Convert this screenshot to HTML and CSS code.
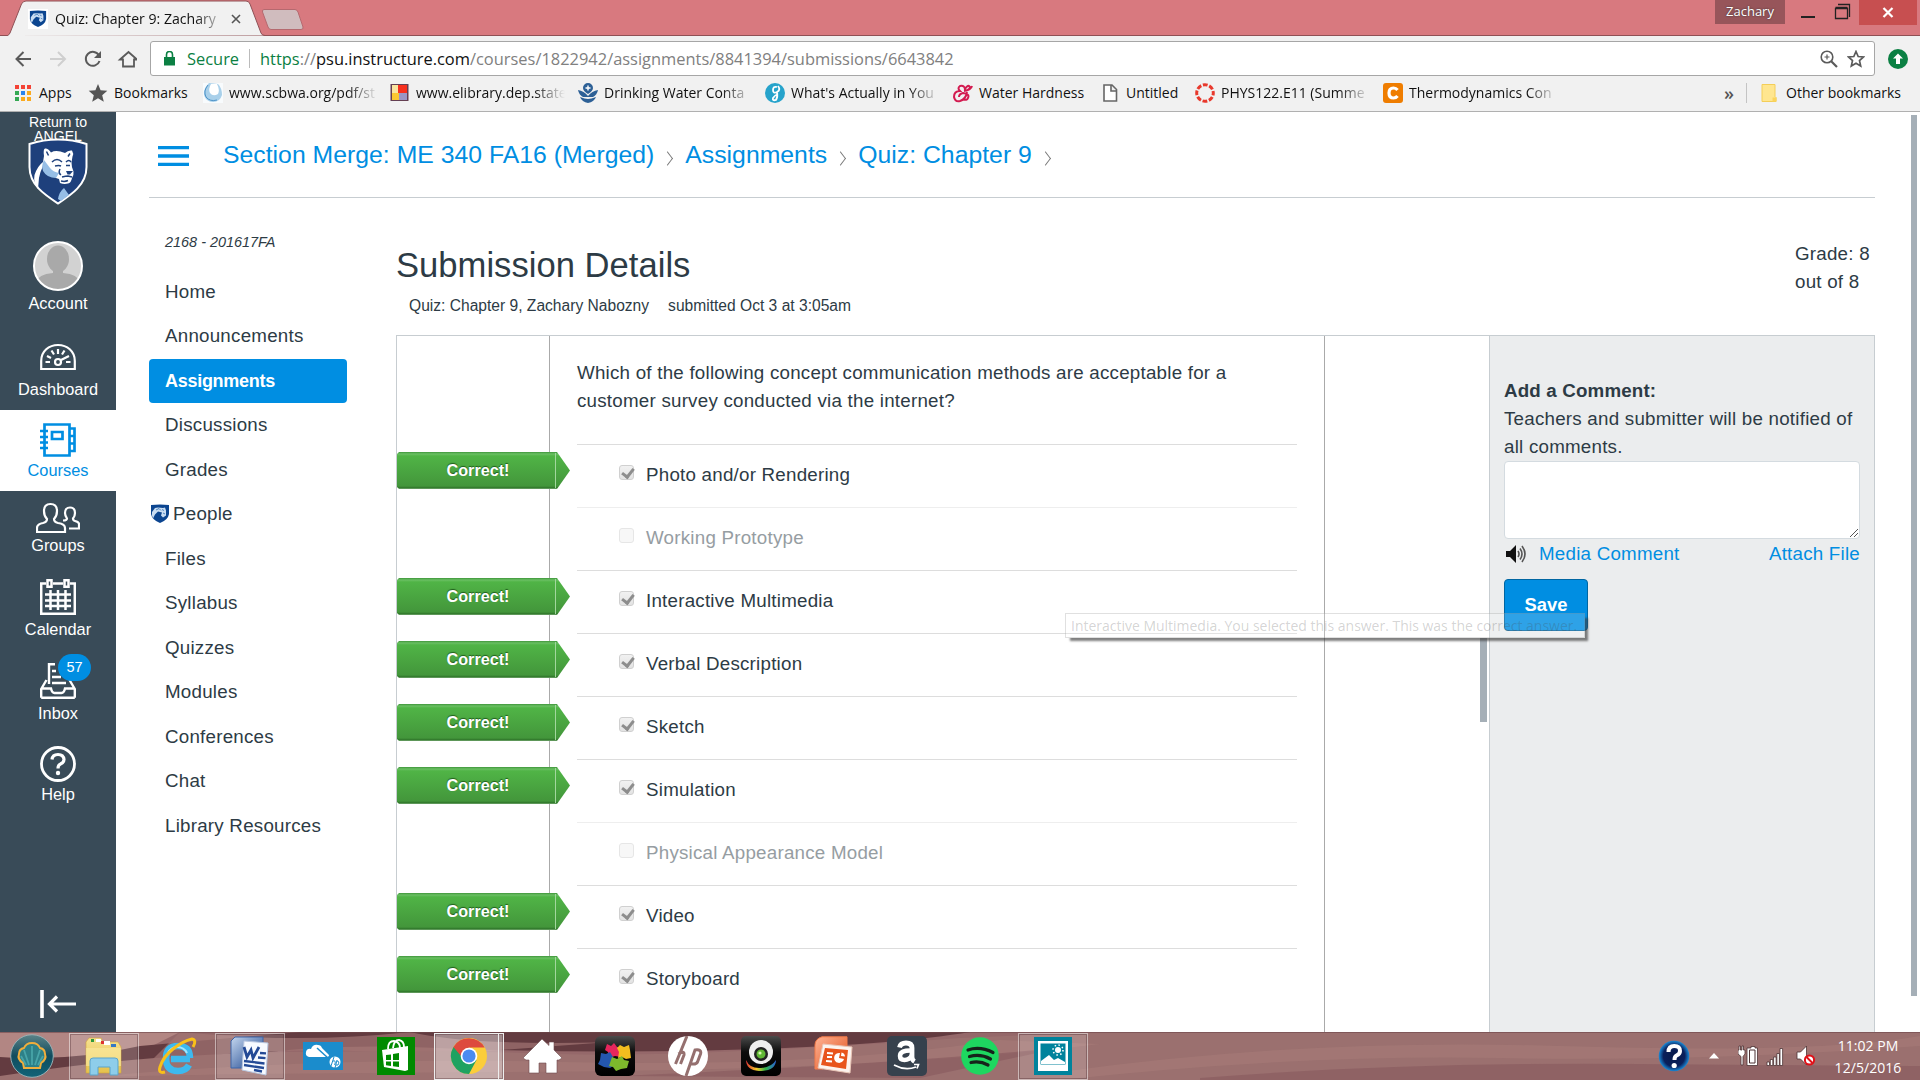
FILE: index.html
```html
<!DOCTYPE html>
<html lang="en">
<head>
<meta charset="utf-8">
<title>Quiz: Chapter 9: Zachary Nabozny</title>
<link rel="stylesheet" href="styles.css">
</head>
<body>
<svg class="defs" aria-hidden="true">
  <defs>
    <symbol id="lion" viewBox="0 0 60 67">
      <path d="M1.500 6Q30-3 58.500 6V29C58.500 47 43 57 30 65.500 17 57 1.500 47 1.500 29Z" fill="#1e407c" stroke="#fff" stroke-width="2"/>
      <path d="M16 18Q15 11 17 10.500q3-.5 6 4 5-3 14 .5 3-3 7-2.500 2 3 .5 6l-1 6q0 5 2 9 .5 4-1.500 6.500-1 5-4 5.500-4 1-8-.5l-1-4q-5-1-8-6l-8-7q-3 6-4 12l-1 11Q5 45 6.500 37q3-9 8.500-13z" fill="#fff"/>
      <path d="M16 22l6 8q3 4 9 5l-3 5q-9 0-13-7-2-5 1-11zM36 50l5 7-8 6-3-2q1-7 6-11z" fill="#96bee6"/>
      <path d="M24 24q5-5 10 0M38 24q3-3 5 0M27 28q4-1 6 0M38 27.500h4M34 39q4-1 6-1l4 1M33 43q4 1 7-.5M18.500 13.500l2 4M42 15.500l-2 3M32 31q-2 4 1 6" fill="none" stroke="#1e407c" stroke-width="1.500"/>
      <path d="M38 33h7l-3 3.500h-2.500z" fill="#1e407c"/>
    </symbol>
    <symbol id="lion-small" viewBox="0 0 20 20">
      <path d="M1 1q9-1 18 0v9q-1 6-9 9-8-3-9-9z" fill="#0b4590"/>
      <path d="M2 8l3-4 3-.500 5 .5 2-.5 1 3v5l-3 2-2-2 1-3-4-1-3 3-2 4-1-3z" fill="#c9ddf2"/>
      <path d="M6 6l3-1.500 2 2M12 5.500l2 1M13 9l2 1" stroke="#4f86c0" fill="none"/>
    </symbol>
    <linearGradient id="shellbg" x1="0" y1="0" x2="0" y2="1"><stop offset="0" stop-color="#5b8388"/><stop offset=".5" stop-color="#104c5e"/><stop offset="1" stop-color="#126478"/></linearGradient>
    <linearGradient id="fold" x1="0" y1="0" x2="0" y2="1"><stop offset="0" stop-color="#f7e190"/><stop offset="1" stop-color="#e5c14c"/></linearGradient>
    <linearGradient id="blk" x1="0" y1="0" x2="0" y2="1"><stop offset="0" stop-color="#4b4b4b"/><stop offset=".4" stop-color="#0c0c0c"/><stop offset="1" stop-color="#000"/></linearGradient>
    <linearGradient id="wordbg" x1="0" y1="0" x2="1" y2="1"><stop offset="0" stop-color="#c5d7ef"/><stop offset="1" stop-color="#153f8a"/></linearGradient>
    <linearGradient id="pptbg" x1="0" y1="0" x2="1" y2="1"><stop offset="0" stop-color="#ffb394"/><stop offset="1" stop-color="#e0501c"/></linearGradient>
    <linearGradient id="rain"><stop offset="0" stop-color="#d33"/><stop offset=".35" stop-color="#f4c82b"/><stop offset=".65" stop-color="#32b44a"/><stop offset="1" stop-color="#2a62d8"/></linearGradient>
    <radialGradient id="helpbg"><stop offset="0" stop-color="#081a4a"/><stop offset=".7" stop-color="#0a205c"/><stop offset="1" stop-color="#1b8ad6"/></radialGradient>
  </defs>
</svg>

<header class="browser">
  <div class="titlebar">
    <div class="tab">
      <svg class="tab-shape" width="260" height="36" viewBox="0 0 260 36"><path d="M0 36Q2 35 3 33L14.500 4Q16 1 19 1H239Q242 1 243 4L254 33Q255 35.500 258 35.500" fill="#f1f1f1" stroke="#8f5055" stroke-width="1"/></svg>
      <div class="tab-content">
        <span class="favicon"><svg width="18" height="20"><use href="#lion-small"/></svg></span>
        <span class="tab-title">Quiz: Chapter 9: Zachary</span>
        <svg width="10" height="10" viewBox="0 0 10 10"><path d="M1 1l8 8M9 1L1 9" stroke="#555" stroke-width="1.600"/></svg>
      </div>
    </div>
    <svg class="newtab" width="42" height="21" viewBox="0 0 42 21"><path d="M2 .5H33Q35 .5 36 3L41 18Q41.500 20.500 39 20.500H9Q7 20.500 6 18L.5 3Q0 .5 2 .5Z" fill="#d0bcbe" stroke="#b5696f"/></svg>
    <div class="window-buttons">
      <span class="profile">Zachary</span>
      <svg width="74" height="26" viewBox="0 0 74 26"><path d="M16 17h14" stroke="#222" stroke-width="2"/><path d="M50.500 8.500h12v10h-12zM50.500 7.500h12M53 4.500h11.500V17" fill="none" stroke="#222" stroke-width="1.300"/></svg>
      <span class="close"><svg width="12" height="11" viewBox="0 0 12 11"><path d="M1.500 1l9 9M10.500 1l-9 9" stroke="#fff" stroke-width="2.200"/></svg></span>
    </div>
  </div>
  <div class="toolbar">
    <svg class="nav-icons" width="122" height="20" viewBox="0 0 122 20" fill="none" stroke-width="2">
      <path d="M16 10H1.500M8.500 3l-7 7 7 7" stroke="#5a5a5a"/>
      <path d="M35 10h14.500M43 3l7 7-7 7" stroke="#cfcfcf"/>
      <path d="M84 6.500A7 7 0 1 0 84.500 12" stroke="#5a5a5a"/><path d="M86 2v7h-7z" fill="#5a5a5a"/>
      <path d="M105 10.500l8.500-7.500L122 10.500h-3v7h-11v-7z" stroke="#5a5a5a" stroke-width="1.800"/>
    </svg>
    <div class="omnibox">
      <svg width="11" height="15" viewBox="0 0 11 15"><path d="M0 6h11v8.500H0z" fill="#0b8043"/><path d="M2.500 6V3.500a3 3 0 0 1 6 0V6" fill="none" stroke="#0b8043" stroke-width="1.600"/></svg>
      <span class="secure">Secure</span>
      <span class="url"><span class="scheme">https</span>://<span class="host">psu.instructure.com</span>/courses/1822942/assignments/8841394/submissions/6643842</span>
      <svg class="zoom-icon" width="18" height="18" viewBox="0 0 18 18" fill="none" stroke="#5a5a5a"><circle cx="7" cy="7" r="5.800" stroke-width="1.600"/><path d="M11 11l6 6" stroke-width="2.200"/><path d="M4.500 7h5M7 4.500v5" stroke-width="1.200"/></svg>
      <svg class="star" width="18" height="18" viewBox="0 0 18 18"><path d="M9 1.500l2.200 5 5.300.5-4 3.600 1.200 5.400L9 13.200 4.300 16l1.200-5.400L1.500 7l5.300-.5z" fill="none" stroke="#5a5a5a" stroke-width="1.700"/></svg>
    </div>
    <svg class="update" width="20" height="20" viewBox="0 0 20 20"><circle cx="10" cy="10" r="10" fill="#0b8043"/><path d="M10 4.500l5 5h-3V15H8V9.500H5z" fill="#fff"/></svg>
  </div>
  <div class="bookmarks">
    <div class="bm"><svg viewBox="0 0 20 20"><g fill="#f44336"><path d="M2 2h4v4H2zM8 2h4v4H8zM14 2h4v4h-4z"/></g><path d="M2 8h4v4H2zM2 14h4v4H2z" fill="#34a853"/><path d="M8 8h4v4H8z" fill="#2a84f0"/><path d="M14 8h4v4h-4zM8 14h4v4H8zM14 14h4v4h-4z" fill="#fbaa1e"/></svg><span>Apps</span></div>
    <div class="bm"><svg viewBox="0 0 20 20"><path d="M10 1l2.600 6.200 6.700.6-5.100 4.400 1.600 6.600L10 15.300l-5.800 3.500 1.600-6.600L.7 7.800l6.700-.6z" fill="#555"/></svg><span>Bookmarks</span></div>
    <div class="bm fade"><svg viewBox="0 0 20 20"><path d="M0 0h20v20H0z" fill="#f8fbfd"/><path d="M6 0Q0 6 1 12q2 7 9 7t9-7q0-7-4-11z" fill="#a9d0ea"/><path d="M8 1q-3 5-1 9 3 4 8 1 2-4-1-10z" fill="#fff"/><path d="M5 2Q0 8 3 14q4 5 11 3" fill="none" stroke="#4e93c8"/></svg><span>www.scbwa.org/pdf/st</span></div>
    <div class="bm fade"><svg viewBox="0 0 20 20"><path d="M.5 1h18v17H.5z" fill="#643f52"/><path d="M2 2h6v8H2z" fill="#f9e5a0"/><path d="M8 2h9v8H8z" fill="#f7301e"/><path d="M2 10h7v7H2z" fill="#fbc832"/><path d="M9 10h8v7H9z" fill="#9b95c5"/></svg><span>www.elibrary.dep.state</span></div>
    <div class="bm fade"><svg viewBox="0 0 20 20"><path d="M5 5a5 5 0 0 1 10 0q0 3-5 6-5-3-5-6zM0 7q6 1 10 6 4-5 10-6-1 5-5 7H5Q1 12 0 7zM2 14q5 2 8 2t8-2q-2 5-8 6-6-1-8-6z" fill="#2d6096"/><path d="M7.500 5h5M10 2.500v5" stroke="#fff" stroke-width="1.400"/></svg><span>Drinking Water Conta</span></div>
    <div class="bm fade"><svg viewBox="0 0 20 20"><circle cx="10" cy="10" r="10" fill="#26a3cb"/><path d="M12 4q-4-1-4 3t4 2 1-6M12 9q1 5-1 8-4 1-3-2 2-3 5-4" fill="none" stroke="#fff" stroke-width="1.800"/></svg><span>What's Actually in You</span></div>
    <div class="bm"><svg viewBox="0 0 20 20"><path d="M12 7q0-5-5-4-3 2 0 5-6 0-6 6 1 5 6 4 6-2 7-9M6 14q0-3 4-4 7 1 5 5-1 3-5 1M12 6q3-5 5-2 0 3-6 4 7-1 8-5" fill="none" stroke="#d31b50" stroke-width="2"/></svg><span>Water Hardness</span></div>
    <div class="bm untitled"><svg viewBox="0 0 20 20"><path d="M4 2h8l4.500 4.500V18H4zM11 2v6h6" fill="#fff" stroke="#666" stroke-width="1.600"/></svg><span>Untitled</span></div>
    <div class="bm fade"><svg viewBox="0 0 20 20"><circle cx="10" cy="10" r="8.300" fill="none" stroke="#e8392c" stroke-width="3" stroke-dasharray="4.800 1.720" stroke-dashoffset="2.400"/></svg><span>PHYS122.E11 (Summe</span></div>
    <div class="bm fade"><svg viewBox="0 0 20 20"><rect width="20" height="20" rx="3" fill="#ef7d00"/><path d="M14.500 7Q13 5 10.500 5 6 5 6 10t4.500 5q2.500 0 4-2" fill="none" stroke="#fff" stroke-width="3.200"/></svg><span>Thermodynamics Con</span></div>
    <span class="more">»</span>
    <span class="other"><svg width="16" height="18" viewBox="0 0 16 18"><path d="M1 .5h13v12l1 1v4H1z" fill="#ffe68f" stroke="#f4ce58"/><path d="M11.500 13.500h4v4h-4z" fill="#fbd45c"/></svg><span>Other bookmarks</span></span>
  </div>
</header>

<main class="page">
  <nav class="global-nav">
    <div class="logo"><div class="angel">Return to<br>ANGEL</div><svg width="60" height="67"><use href="#lion"/></svg></div>
    <div class="gn account"><svg width="50" height="50" viewBox="0 0 50 50"><defs><clipPath id="av"><circle cx="25" cy="25" r="24"/></clipPath></defs><circle cx="25" cy="25" r="24" fill="#d2d2d2"/><g clip-path="url(#av)" fill="#a9a9a9"><ellipse cx="25" cy="18" rx="11" ry="13.500"/><path d="M20 28h10v4q15 1 17 10v8H3v-8q2-9 17-10z"/></g><circle cx="25" cy="25" r="24" fill="none" stroke="#fff" stroke-width="2"/></svg><span>Account</span></div>
    <div class="gn dash"><svg width="36" height="36" viewBox="0 0 36 36" fill="none" stroke="#fff" stroke-width="2.200"><path d="M1.200 30V22C1.200 12 9 6 18 6s16.800 6 16.800 16v8z"/><circle cx="18" cy="23" r="3"/><path d="M21 21l8-4M5.500 23H10M26 23h4.500M7 17l4 2M11.500 11.500l2.500 4M18 10v5M24.500 11.500l-2.500 4"/></svg><span>Dashboard</span></div>
    <div class="gn active"><svg width="36" height="36" viewBox="0 0 36 36" fill="none" stroke="#008ee2" stroke-width="2.700"><path d="M4.500 2.500h25v31h-25zM29.500 6.500h5v22.500h-5M29.500 14h5M29.500 21.500h5M12 10h10.500v7H12z"/><path d="M0 9h8M0 15h8M0 20.500h8M0 26h8"/></svg><span>Courses</span></div>
    <div class="gn groups"><svg width="44" height="36" viewBox="0 0 44 36" fill="none" stroke="#fff" stroke-width="2.200"><path d="M1 32v-4q0-4 6-5 4-1 4-4-3-3-3-8 0-7 6.500-7T21 11q0 5-3 8 0 3 4 4 7 1 7 5v4zM27 20.500q4 0 4-2-2-3-2-5.500 0-5.500 5-5.500t5 5.500q0 3-2 5.500 0 2 2 2.500 4 1 4 3v4.500H33"/></svg><span>Groups</span></div>
    <div class="gn cal"><svg width="36" height="36" viewBox="0 0 36 36" fill="none" stroke="#fff" stroke-width="2.500"><path d="M6 4.500H1.200v30.300h33.600V4.500H30M13 4.500h10"/><path d="M7.500 1.200h4v6.600h-4zM24.500 1.200h4v6.600h-4z" /><path d="M5 15.500h26M5 21.500h26M5 27h26M10.500 11v20M18 11v20M25.500 11v20"/></svg><span>Calendar</span></div>
    <div class="gn inbox"><svg width="36" height="36" viewBox="0 0 36 36" fill="none" stroke="#fff" stroke-width="2.400"><path d="M1.200 34.800V26L6.500 17M34.800 34.800V26L29.500 17M1.200 25.500H11q1 4.500 3.500 4.500h7q2.500 0 3.500-4.500h9.800M1.200 34.800h33.600M9 21V1.200h6M12 8h4M12 14h9M12 20h14"/></svg><b class="badge">57</b><span>Inbox</span></div>
    <div class="gn help"><svg width="36" height="36" viewBox="0 0 36 36" fill="none" stroke="#fff" stroke-width="2.800"><circle cx="18" cy="18" r="16.500"/><path d="M12 13.500q.5-5 6-5t6 5q0 3-3.500 4.500-2.500 1-2.500 4.500" stroke-width="3.200"/><circle cx="18" cy="27" r="2.200" fill="#fff" stroke="none"/></svg><span>Help</span></div>
    <svg class="collapse" width="36" height="28" viewBox="0 0 36 28" fill="none" stroke="#fff" stroke-width="3.600"><path d="M2 0v28"/><path d="M36 14H10M17 6.500L9.500 14l7.500 7.500" stroke-width="3.200"/></svg>
  </nav>

  <div class="content">
    <div class="crumbs">
      <svg class="burger" width="31" height="20" viewBox="0 0 31 20"><path d="M0 1.700h31M0 10h31M0 18.300h31" stroke="#008ee2" stroke-width="3.300"/></svg>
      <a>Section Merge: ME 340 FA16 (Merged)</a><i></i><a>Assignments</a><i></i><a>Quiz: Chapter 9</a><i></i>
    </div>
    <div class="columns">
      <nav class="course-nav">
        <div class="term">2168 - 201617FA</div>
        <a>Home</a><a>Announcements</a><a class="on">Assignments</a><a>Discussions</a><a>Grades</a><a class="people"><svg width="20" height="20"><use href="#lion-small"/></svg>People</a><a>Files</a><a>Syllabus</a><a>Quizzes</a><a>Modules</a><a>Conferences</a><a>Chat</a><a>Library Resources</a>
      </nav>
      <section class="submission">
        <div class="head">
          <div>
            <h1>Submission Details</h1>
            <div class="meta"><span>Quiz: Chapter 9, Zachary Nabozny</span><span>submitted Oct 3 at 3:05am</span></div>
          </div>
          <div class="grade">Grade: 8<br>out of 8</div>
        </div>
        <div class="frame">
          <div class="preview">
            <div class="gutter"></div>
            <div class="quiz">
              <p>Which of the following concept communication methods are acceptable for a<br>customer survey conducted via the internet?</p>
              <div class="answer ok"><b class="tag">Correct!</b><span class="box"></span>Photo and/or Rendering</div>
              <div class="answer no"><span class="box"></span>Working Prototype</div>
              <div class="answer ok"><b class="tag">Correct!</b><span class="box"></span>Interactive Multimedia</div>
              <div class="answer ok"><b class="tag">Correct!</b><span class="box"></span>Verbal Description</div>
              <div class="answer ok"><b class="tag">Correct!</b><span class="box"></span>Sketch</div>
              <div class="answer ok"><b class="tag">Correct!</b><span class="box"></span>Simulation</div>
              <div class="answer no"><span class="box"></span>Physical Appearance Model</div>
              <div class="answer ok"><b class="tag">Correct!</b><span class="box"></span>Video</div>
              <div class="answer ok"><b class="tag">Correct!</b><span class="box"></span>Storyboard</div>
            </div>
            <div class="inner-scroll"></div>
          </div>
          <aside class="comments">
            <b>Add a Comment:</b>
            <div class="hint">Teachers and submitter will be notified of<br>all comments.</div>
            <div class="textarea"><svg width="8" height="8" viewBox="0 0 8 8"><path d="M0 8l8-8M4 8l4-4" stroke="#555" stroke-width="1"/></svg></div>
            <div class="links">
              <svg width="20" height="18" viewBox="0 0 20 18"><path d="M0 6h4l6-6v18l-6-6H0z" fill="#111"/><path d="M12 6q2 3 0 6M14 3.500q4 5.500 0 11M16 1q6 8 0 16" fill="none" stroke="#555" stroke-width="1.600"/></svg>
              <a>Media Comment</a><a class="attach">Attach File</a>
            </div>
            <button class="save">Save</button>
          </aside>
        </div>
      </section>
    </div>
  </div>
  <div class="outer-scroll"></div>
  <div class="tooltip">Interactive Multimedia. You selected this answer. This was the correct answer.</div>
</main>

<footer class="taskbar">
  <svg class="dunes" width="1920" height="48" preserveAspectRatio="none" viewBox="0 0 1920 48">
    <path d="M0 0H1920V48H0z" fill="#95686a"/>
    <path d="M0 0H180L120 30 0 34z" fill="#b28683"/><path d="M0 25Q70 30 140 14L300 0H970Q900 12 760 17T460 17Q340 10 250 22T0 46z" fill="#633b40"/>
    <path d="M180 0q120 12 230 0 60 14 200 10L420 24Q300 10 150 30z" fill="#a27573" opacity=".7"/>
    <path d="M0 44Q140 22 290 20T560 22 960 6L1100 0H1920V48H0z" fill="#9b706f"/>
    <path d="M60 48Q300 24 560 30T1000 8L1100 12Q900 38 500 40T60 48zM1060 40Q1300 6 1560 14t360-10v10Q1700 30 1500 26t-440 22z" fill="#a77b78" opacity=".55"/>
    <path d="M620 44Q860 34 1060 16L920 46zM1200 46Q1400 30 1640 32t280 2v14H1200z" fill="#87595d" opacity=".6"/>
    <path d="M0 .5H1920" stroke="#6f474b" opacity=".6"/>
  </svg>
  <div class="apps">
    <span class="start"><svg width="44" height="44" viewBox="0 0 44 44"><circle cx="22" cy="22" r="21.300" fill="url(#shellbg)" stroke="#9ab0b4"/><path d="M14 34l-1-5q-6-4-4-9 0-5 5-6 2-5 8-5t8 5q5 1 5 6 2 5-4 9l-1 5z" fill="#2d8088" stroke="#f0ae3c" stroke-width="2"/><path d="M22 31V12M19 31l-5-15M25 31l5-15M16 31l-5-9M28 31l5-9" stroke="#48a4a8" stroke-width="1.800"/></svg></span>
    <span class="app open"><svg viewBox="0 0 40 40"><path d="M5 2h12l2 4h15l3 5v26H2V6z" fill="url(#fold)" stroke="#d0a53a" stroke-width=".6"/><path d="M12 3h5v3h-5zM20 5h6v4h-6z" fill="#fff"/><path d="M7 3h3v3H7z" fill="#2f9a3c"/><path d="M17 5h3v3h-3z" fill="#d33"/><path d="M27 8h5v3h-5z" fill="#3678c4"/><path d="M2 12h35v18H2z" fill="#fceba2" opacity=".6"/><path d="M6 39V25q0-3 3-3h22q3 0 3 3v14h-8v-8H14v8z" fill="#8ecdea" stroke="#5aa4cb"/></svg></span>
    <span class="app"><svg viewBox="0 0 40 40"><path d="M33 23H14M33 22q0-12-12-12T9 22.500 21 35q8 0 11-6" fill="none" stroke="#3db9ee" stroke-width="6.500"/><path d="M30 17q-3-6-10-6-6 0-9 6" fill="none" stroke="#a4e5fb" stroke-width="2"/><path d="M8 36q-7 2-5-5 3-10 13-18T35 3q5 1 1 8" fill="none" stroke="#f9c019" stroke-width="3"/></svg></span>
    <span class="app open"><svg viewBox="0 0 40 40"><path d="M5 1h28v31H1V5z" fill="url(#wordbg)" stroke="#3d65a8"/><path d="M14 5l24 2-2 32-24-5z" fill="#f7faff" stroke="#b8c6df"/><path d="M14 11l3 10 4-7 2 8 6-11" fill="none" stroke="#244a96" stroke-width="2.800"/><path d="M30 17l6 .4M28 21.500l7.500.6M14 25l20.500 2.500M14 29l20 3M24 34l8 1.500" stroke="#244a96" stroke-width="2.300"/></svg></span>
    <span class="app"><svg viewBox="0 0 40 40"><path d="M0 6h40v28H0z" fill="#1b8ccc"/><path d="M6 21q-4-1-3-5 1-4 5-3 2-5 7-4 3 0 4 3l7 7q0 2-3 2z" fill="#fff"/><path d="M14 12l11 10" stroke="#1b8ccc" stroke-width="1.500"/><circle cx="32" cy="26" r="5.500" fill="#fff"/><path d="M31 21l-3 9M30 25q3-1 2 3l-.5 1M34 24l-2 8M34 25q3 0 1 4h-2" fill="none" stroke="#1b8ccc"/></svg></span>
    <span class="app"><svg viewBox="0 0 40 40"><path d="M1 1h38v38H1z" fill="#008a00"/><path d="M6 14l26-4v24l-3 1L8 31z" fill="#fff"/><path d="M12 13q0-8 6-8 6 1 6 7M17 12q1-8 6-8 5 1 5 7" fill="none" stroke="#fff" stroke-width="1.800"/><path d="M10 19l5-.6V24h-5zM17 18l6-1v7h-6zM10 25.500h5V30l-5-.7zM17 25.500h6V31l-6-.7z" fill="#008a00"/></svg></span>
    <span class="app open focus"><svg viewBox="0 0 40 40"><circle cx="20" cy="20" r="18" fill="#fbcd3a"/><path d="M4.400 11A18 18 0 0 0 20 38l7.500-14L20 20z" fill="#1fa261"/><path d="M4.400 11A18 18 0 0 1 35.600 11.500H20L12 20z" fill="#dd4b3e"/><circle cx="20" cy="20" r="8.300" fill="#fff"/><circle cx="20" cy="20" r="6.600" fill="#4b8bf0"/></svg></span>
    <span class="app"><svg viewBox="0 0 40 40"><path d="M20 3l7 6.500V6h5v8l8 8-3 2h-2v13H24V27h-7v10H7V24H4l-3-2z" fill="#fff" stroke="#6e4b4e" stroke-width=".6"/></svg></span>
    <span class="app"><svg viewBox="0 0 40 40"><rect width="40" height="40" rx="6" fill="url(#blk)"/><path d="M12 8l4 2 3-3 3 4h4l-2 5 2 5-6-1-6 2-1-6-3-2z" fill="#e5265d"/><path d="M25 9l4 2 5-2 1 5 1 8-5 1-4-2-4 1 1-6-2-4z" fill="#f2bd1f"/><path d="M6 17l5 1 4-2 3 5-1 4 3 4-5 3-6-1-6-3 2-4z" fill="#2457ae"/><path d="M17 21l5 2 5-3 2 4 5 1-2 7-6 1-5 2-3-4-4-1z" fill="#7db92c"/></svg></span>
    <span class="app"><svg viewBox="0 0 40 40"><circle cx="20" cy="20" r="20" fill="#fff"/><path d="M19 0L7.500 28M10.500 18q6-4 5.500 1l-3.500 9M18 40l9-26q7-1 5.500 4l-3 8q-1 2-4 2h-3" fill="none" stroke="#95706f" stroke-width="3"/></svg></span>
    <span class="app"><svg viewBox="0 0 40 40"><rect width="40" height="40" rx="5" fill="url(#blk)"/><path d="M5 24q4 9 15 8t15-8q0 11-17 11Q5 34 5 24z" fill="url(#rain)"/><circle cx="20" cy="16" r="12" fill="#eee"/><circle cx="20" cy="18" r="7" fill="#222"/><circle cx="20" cy="18" r="4.500" fill="#5fb733"/><circle cx="19" cy="17" r="1.600" fill="#d7f7b0"/></svg></span>
    <span class="app"><svg viewBox="0 0 40 40"><path d="M8 .8h25v12H18L9 33H1V9q0-6 7-8.200z" fill="url(#pptbg)" stroke="#f47a48"/><path d="M9 8l29 3-2 26-32-5z" fill="#fdf3ee" stroke="#e9c5b6"/><path d="M11 12l23 2-2 19-25-4z" fill="#e8541c"/><path d="M13 17l6 .5M13 21h5M12 25l6 .5" stroke="#fff" stroke-width="2"/><path d="M26 17a5 5 0 1 0 4 6l-5-1zM27.500 16.500a4.500 4.500 0 0 1 3.500 4l-4-.5z" fill="#fff"/></svg></span>
    <span class="app"><svg viewBox="0 0 40 40"><rect width="40" height="40" rx="5" fill="#36414d"/><path d="M12.500 11.500q1-4.500 6.500-4.500 6 0 6 5v9q0 3 2.500 4.500" fill="none" stroke="#fff" stroke-width="4.800"/><path d="M25 14.500q-12-.5-12 5.500 0 4 4.500 4 5 0 7.500-5" fill="none" stroke="#fff" stroke-width="4.500"/><path d="M7 29q11 6 22 2M27 28.500h4.500l-1.500 4" fill="none" stroke="#fff" stroke-width="1.700"/></svg></span>
    <span class="app"><svg viewBox="0 0 40 40"><circle cx="20" cy="20" r="18.800" fill="#1ed760"/><path d="M8 14q12-4 25 2.500M9.500 20.500q11-3 21 2.500M11 26.500q9-2 17 2.500" fill="none" stroke="#16231b" stroke-width="3.200" stroke-linecap="round"/></svg></span>
    <span class="app open"><svg viewBox="0 0 40 40"><path d="M1 1h38v38H1z" fill="#00839c"/><path d="M5 5h30v30H5zM7.500 7.500v21h25v-21z" fill="#fff" fill-rule="evenodd"/><path d="M8 28v-3l8-6 5 5 4-2 7 4v2z" fill="#fff"/><circle cx="25" cy="14" r="3" fill="#fff"/><circle cx="25" cy="14" r="5" fill="none" stroke="#fff" stroke-dasharray="1.500 2.400" stroke-width="1.500"/></svg></span>
  </div>
  <div class="tray">
    <svg width="32" height="32" viewBox="0 0 32 32"><circle cx="16" cy="16" r="15.300" fill="url(#helpbg)"/><path d="M10.500 12q0-6 5.800-6t5.700 5q0 3-3.500 4.500-2 1-2 4.500" fill="none" stroke="#fff" stroke-width="4"/><circle cx="16.200" cy="25.500" r="2.600" fill="#fff"/></svg>
    <svg class="up" width="10" height="6" viewBox="0 0 10 6"><path d="M5 0l5 5.500H0z" fill="#fff"/></svg>
    <svg class="status" width="78" height="22" viewBox="0 0 78 22"><g stroke="#4d3335" stroke-width=".8" fill="#fff"><path d="M1 1h1.500v4h1.500V1h1.500v4H7v4L5 11.500V20H3v-8.500L0 9V5h1zM10 3h3V1.500h4V3h2.500v17.500H9V3zM29 17h2.500v3.500H29zM32.300 14.500h2.500v6h-2.500zM35.600 12h2.500v8.500h-2.500zM38.900 8.500h2.500v12h-2.500zM42 3.500h2.600v17H42zM59 7h3.500l6-6v19l-6-6H59z"/></g><path d="M11.500 5h5.500v13h-5.500z" fill="none" stroke="#4d3335"/><circle cx="71.500" cy="15" r="4.600" fill="#fff" stroke="#e01018" stroke-width="2"/><path d="M68.500 12l6 6" stroke="#e01018" stroke-width="2"/></svg>
    <div class="clock">11:02 PM<br>12/5/2016</div>
  </div>
</footer>
</body>
</html>
```
FILE: styles.css
```css
* { box-sizing: border-box; }
body {
  margin: 0;
  width: 1920px;
  height: 1080px;
  overflow: hidden;
  display: flex;
  flex-direction: column;
  background: #fff;
  font: 18.75px/28px "Liberation Sans", Arial, sans-serif;
  letter-spacing: .23px;
  color: #2d3b45;
}
svg { display: block; flex: none; }
.defs { position: absolute; width: 0; height: 0; }
a { color: #008ee2; text-decoration: none; }

/* Browser window */
.browser {
  flex: none;
  height: 112px;
  background: #f1f1f1;
  border-bottom: 1px solid #b0b0b0;
  font: 14px/20px "Open Sans", "Noto Sans", sans-serif;
  letter-spacing: 0;
  color: #111;
}
.titlebar { height: 36px; background: #d8797f; border-bottom: 1px solid #8f5055; display: flex; padding-left: 7px; }
.tab { position: relative; width: 255px; height: 36px; flex: none; }
.tab-shape { position: absolute; left: 0; top: 0; }
.tab-content { position: relative; display: flex; align-items: center; height: 36px; padding: 2px 0 0 21px; }
.favicon { background: #fff; width: 20px; margin-right: 7px; padding-left: 1px; }
.tab-title { width: 176px; font-size: 14.1px; white-space: nowrap; -webkit-mask-image: linear-gradient(90deg, #000 140px, rgba(0,0,0,.3) 162px); mask-image: linear-gradient(90deg, #000 140px, rgba(0,0,0,.3) 162px); }
.newtab { margin-top: 9px; }
.window-buttons { margin-left: auto; display: flex; margin-right: 3px; }
.profile { width: 70px; height: 24px; background: #97555a; color: #fff; text-align: center; font-size: 13px; line-height: 23px; text-shadow: 0 0 2px #333; }
.close { width: 58px; height: 25px; background: #c74f50; display: grid; place-items: center; }
.toolbar { height: 46px; display: flex; align-items: center; padding-left: 15px; }
.nav-icons { margin-right: 13px; }
.omnibox { width: 1725px; height: 35px; border: 1px solid #a6a6a6; border-radius: 3px; background: #fff; display: flex; align-items: center; padding: 0 9px 0 13px; font-size: 16.43px; margin-top: -1px; }
.secure { color: #0b8043; margin-left: 12px; padding-right: 10px; border-right: 1px solid #bbb; width: 63px; line-height: 19px; }
.url { color: #808080; margin-left: 10px; flex: 1; }
.scheme { color: #0b8043; }
.host { color: #111; }
.zoom-icon { margin-right: 9px; }
.update { margin-left: 13px; }
.bookmarks { height: 28px; display: grid; align-items: center; margin-left: 13px; padding-bottom: 6px; grid-template-columns: 75px 115px 187px 188px 187px 188px 147px 95px 188px 341px 22px auto; }
.bm { display: flex; align-items: center; gap: 6px; white-space: nowrap; }
.bm svg { width: 20px; height: 20px; }
.fade span { -webkit-mask-image: linear-gradient(90deg, #000 118px, transparent 149px); mask-image: linear-gradient(90deg, #000 118px, transparent 149px); }
.more { font-size: 18px; line-height: 18px; font-weight: 600; color: #555; }
.other { display: flex; align-items: center; gap: 9px; border-left: 1px solid #c4c4c4; padding-left: 14px; white-space: nowrap; }

/* Page */
.page { position: relative; flex: 1; display: flex; overflow: hidden; }
.global-nav { width: 116px; background: #394b58; color: #fff; flex: none; display: flex; flex-direction: column; align-items: center; font-size: 16.35px; line-height: 18px; letter-spacing: 0; }
.logo { height: 113px; display: flex; flex-direction: column; align-items: center; }
.angel { font-size: 14.1px; line-height: 13.500px; text-align: center; margin-top: 4px; height: 22px; }
.logo svg { position: relative; }
.gn { width: 116px; display: flex; flex-direction: column; align-items: center; justify-content: flex-end; gap: 3px; padding-bottom: 13px; height: 84px; position: relative; flex: none; }
.account { height: 100px; }
.dash { height: 85px; gap: 5px; padding-bottom: 12px; }
.active { height: 81px; background: #fff; color: #008ee2; padding-bottom: 12px; }
.groups { height: 76px; gap: 0; }
.cal, .inbox { gap: 5px; }
.help { height: 81px; }
.badge { position: absolute; left: 58px; top: 3px; width: 33px; height: 27px; border-radius: 14px; background: #008ee2; font-size: 14.500px; line-height: 27px; text-align: center; font-weight: 400; }
.collapse { margin-top: auto; margin-bottom: 14px; }
.content { box-sizing: content-box; width: 1726px; padding-left: 33px; display: flex; flex-direction: column; }
.crumbs { height: 86px; flex: none; border-bottom: 1px solid #c7cdd1; display: flex; align-items: center; font-size: 24.75px; letter-spacing: .02px; padding: 0 0 0 9px; white-space: nowrap; }
.burger { margin-right: 34px; margin-top: 2px; }
.crumbs i { width: 9px; height: 9px; border: solid #777; border-width: 1.400px 1.400px 0 0; transform: rotate(45deg) skew(8deg, 8deg); margin: 7px 13px 0 9px; }
.columns { display: flex; flex: 1; min-height: 0; }
.course-nav { width: 198px; margin-right: 49px; display: flex; flex-direction: column; padding-top: 30px; }
.term { font-size: 14.45px; font-style: italic; letter-spacing: 0; padding-left: 16px; height: 41.500px; line-height: 28px; flex: none; }
.course-nav a { height: 44.5px; flex: none; line-height: 44px; padding-left: 16px; color: #2d3b45; display: flex; align-items: center; }
.course-nav .on { background: #008ee2; color: #fff; font-weight: 700; font-size: 18px; letter-spacing: -.28px; border-radius: 4px; height: 44px; margin-bottom: .5px; }
.course-nav .people { padding-left: 1px; gap: 3px; }
.submission { width: 1479px; display: flex; flex-direction: column; }
.head { height: 137px; flex: none; display: flex; justify-content: space-between; }
h1 { margin: 47px 0 0; font-weight: 400; font-size: 34.6px; line-height: 40px; letter-spacing: .02px; }
.meta { margin: 7px 0 0 13px; font-size: 15.6px; line-height: 28px; letter-spacing: 0; display: flex; gap: 19px; }
.grade { width: 80px; margin-top: 42px; white-space: nowrap; }
.frame { flex: 1; display: flex; border: 1px solid #c7cdd1; border-bottom: 0; min-height: 0; overflow: hidden; }
.preview { width: 1092px; display: flex; flex: none; }
.gutter { width: 152px; }
.quiz { width: 776px; border: solid #aaa; border-width: 0 1px; padding: 23px 27px 0; white-space: nowrap; }
.quiz p { margin: 0 0 29px; }
.answer { position: relative; height: 63px; border-top: 1px solid #ddd; display: flex; padding: 16px 0 0 42px; line-height: 28px; width: 720px; }
.no { color: #969da2; border-top-color: #eee; }
.box { width: 15px; height: 15px; margin: 4px 12px 0 0; border: 1px solid #d0d0d0; border-radius: 3px; background: linear-gradient(#f1f1f1, #e3e3e3); position: relative; }
.no .box { border-color: #e6e6e6; background: #f7f7f7; }
.ok .box::after { content: ""; position: absolute; left: 4px; top: 0; width: 5px; height: 9px; border: solid #8d8d8d; border-width: 0 3px 3px 0; transform: rotate(38deg); }
.tag { position: absolute; left: -180px; top: 7px; width: 173px; height: 37px; padding-right: 11px; color: #fff; font-size: 16.2px; line-height: 37px; letter-spacing: 0; text-align: center; text-shadow: 0 -1px 1px rgba(0,40,0,.6); background: linear-gradient(#3f963a 0, #6abf63 2px, #50b446 4px, #43963b 34px, #2f742a 36px, #8bb987 37px); clip-path: polygon(0 2px, 2px 0, 160px 0, 173px 50%, 160px 100%, 2px 100%, 0 35px); }
.tag::after { content: ""; position: absolute; left: 158px; top: 1px; height: 35px; border-left: 1px solid #a2d79d; }
.inner-scroll { width: 7px; height: 84px; background: #a5afb7; margin: 302px 0 0 155px; }
.comments { flex: 1; border-left: 1px solid #c7cdd1; background: #ebedee; padding: 41px 14px 0; }
.comments > b { display: block; letter-spacing: .16px; }
.hint { white-space: nowrap; }
.textarea { width: 356px; height: 78px; border: 1px solid #d4dbe0; border-radius: 4px; background: #fff; display: flex; align-items: flex-end; justify-content: flex-end; padding: 1px; }
.links { display: flex; align-items: center; width: 356px; height: 29px; padding: 1px 0 0 2px; white-space: nowrap; }
.links svg { margin-right: 13px; }
.attach { margin-left: auto; }
.save { display: block; width: 84px; height: 52px; margin-top: 11px; border: 1px solid #0066a2; border-radius: 4px; background: #008ee2; color: #fff; font: 700 18.4px/28px "Liberation Sans", Arial, sans-serif; letter-spacing: 0; padding: 0; }
.outer-scroll { width: 6px; height: 881px; background: #a5afb7; margin: 3px 0 0 36px; }
.tooltip { position: absolute; left: 1065px; top: 501px; width: 520px; height: 25px; padding-left: 5px; border: 1px solid rgba(130,130,130,.25); background: rgba(255,255,255,.18); box-shadow: 4px 4px 2px -1px rgba(60,60,60,.65); color: rgba(70,70,70,.24); font: 13.97px/23px "Open Sans", "Noto Sans", sans-serif; letter-spacing: 0; white-space: nowrap; }

/* Taskbar */
.taskbar { position: relative; height: 48px; flex: none; display: flex; justify-content: space-between; align-items: center; overflow: hidden; }
.dunes { position: absolute; left: 0; top: 0; }
.apps, .tray { position: relative; display: flex; align-items: center; }
.apps { gap: 3px; }
.start { width: 66px; padding-left: 10px; }
.app { width: 70px; height: 47px; display: grid; place-items: center; }
.app svg { width: 40px; height: 40px; }
.open { border: 1px solid rgba(255,255,255,.4); outline: 1px solid rgba(70,35,40,.35); outline-offset: -2px; background: rgba(255,255,255,.16); }
.focus { border-color: #eee; background: rgba(255,255,255,.4); position: relative; }
.focus::after { content: ""; position: absolute; right: 4px; top: 0; bottom: 0; border-right: 1px solid #eee; }
.tray { padding-right: 12px; }
.up { margin: 0 19px; }
.clock { color: #fff; font: 14px/22px "Open Sans", "Noto Sans", sans-serif; letter-spacing: .05px; text-align: center; width: 80px; margin: 2px 0 0 12px; }
```
